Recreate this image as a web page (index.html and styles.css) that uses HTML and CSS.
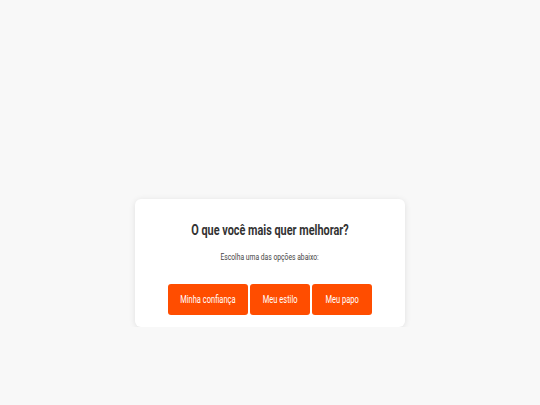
FILE: index.html
```html
<!DOCTYPE html>
<html lang="pt-BR">
<head>
  <meta charset="UTF-8" />
  <title>Quiz</title>
  <link rel="stylesheet" href="styles.css">
</head>
<body>
  <div class="quiz">
    <h2 class="title"><span>O que você mais quer melhorar?</span></h2>
    <p class="subtitle"><span>Escolha uma das opções abaixo:</span></p>
    <div class="options">
      <button class="opt opt-wide"><span>Minha confiança</span></button>
      <button class="opt"><span>Meu estilo</span></button>
      <button class="opt"><span>Meu papo</span></button>
    </div>
  </div>
</body>
</html>
```

FILE: styles.css
```css
html, body {
  margin: 0;
  padding: 0;
  background-color: #f8f8f8;
  font-family: Roboto, "Liberation Sans", Arial, sans-serif;
}

body {
  padding-top: 199px;
}

.quiz {
  width: 270px;
  height: 128px;
  box-sizing: border-box;
  margin: 0 auto;
  padding-top: 22px;
  background-color: #ffffff;
  border-radius: 6px;
  box-shadow: 0 1px 6px rgba(0, 0, 0, 0.1);
  text-align: center;
}

/* text is a bit squeezed sideways */
.title span,
.subtitle span,
.opt span {
  display: inline-block;
  transform: scaleX(0.75);
  white-space: nowrap;
}

.title {
  margin: 0;
  font-size: 14.5px;
  line-height: 20px;
  font-weight: bold;
  color: #333333;
}

.subtitle {
  margin: 10px 0 0;
  font-size: 9px;
  line-height: 12px;
  color: #444444;
}

.options {
  display: flex;
  justify-content: center;
  gap: 2px;
  margin-top: 21px;
}

.opt {
  width: 60px;
  height: 31px;
  padding: 0;
  border: none;
  border-radius: 3px;
  background-color: #ff4d00;
  color: #ffffff;
  font-family: inherit;
  font-size: 10px;
  cursor: pointer;
}

.opt-wide {
  width: 80px;
}

.opt:hover {
  background-color: #e64400;
}
```
